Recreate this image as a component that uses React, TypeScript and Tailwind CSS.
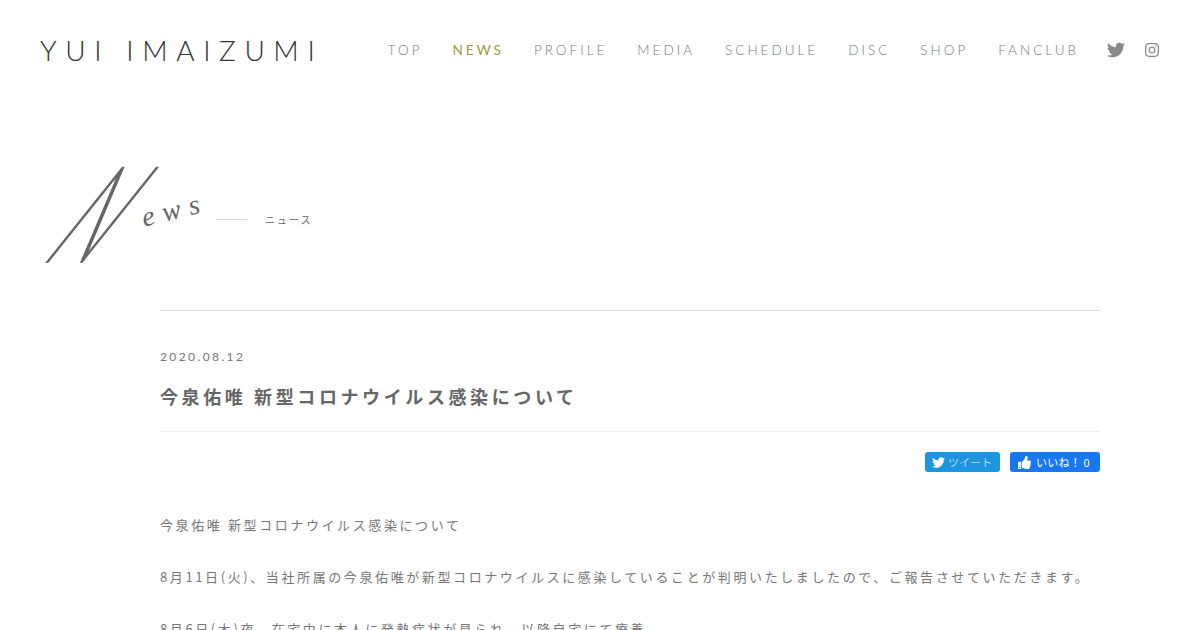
import { FaTwitter, FaInstagram, FaThumbsUp } from "react-icons/fa";

const nav = ["TOP", "NEWS", "PROFILE", "MEDIA", "SCHEDULE", "DISC", "SHOP", "FANCLUB"];

export default function App() {
  return (
    <div className="h-[630px] overflow-hidden bg-white text-[#666] font-['Noto_Sans_CJK_JP',sans-serif]">
      <header className="flex h-[100px] items-center justify-between px-10">
        <h1 className="font-['Lato',sans-serif] text-[28px] font-light leading-none tracking-[8.6px] text-[#333] whitespace-nowrap">
          YUI IMAIZUMI
        </h1>
        <nav className="flex items-center gap-[30px]">
          {nav.map((n) => (
            <span
              key={n}
              className={
                n === "NEWS"
                  ? "font-['Lato',sans-serif] text-[13.5px] font-normal tracking-[3px] text-[#a39a3e] whitespace-nowrap"
                  : "font-['Lato',sans-serif] text-[13.5px] font-light tracking-[3px] text-[#757a80] whitespace-nowrap"
              }
            >
              {n}
            </span>
          ))}
          <div className="-ml-[2px] flex items-center gap-[19px]">
            <FaTwitter className="h-[18px] w-[18px] text-[#888]" />
            <FaInstagram className="h-4 w-4 text-[#888]" />
          </div>
        </nav>
      </header>

      <div className="flex h-[210px] items-start pl-[45px] pt-[68px]">
        <div className="flex h-[94px] w-[156px] items-end text-[#666]">
          <span className="inline-block w-[96px] origin-bottom-left -translate-x-[3px] -translate-y-[4px] scale-x-[0.5] -skew-x-[58deg] font-['Lato',sans-serif] text-[136px] font-light leading-[94px]">N</span>
          <span className="inline-block -translate-y-[38px] -rotate-[14deg] whitespace-nowrap font-['Liberation_Serif',serif] text-[28px] italic leading-none tracking-[0.3em]">ews</span>
        </div>
        <div className="ml-[15px] mt-[51px] h-px w-[31px] bg-[#ddd]" />
        <span className="ml-[18px] mt-[44px] text-[10px] leading-[16px] tracking-[0.2em] text-[#666]">ニュース</span>
      </div>

      <main className="ml-[160px] w-[940px] border-t border-[#ddd]">
        <p className="mt-[38px] font-['Lato',sans-serif] text-[12px] font-normal leading-[16px] tracking-[0.2em] text-[#777]">2020.08.12</p>
        <h2 className="mt-[18px] border-b border-[#eee] pb-[21px] text-[18px] font-bold leading-[27px] tracking-[0.2em] text-[#666]">
          今泉佑唯 新型コロナウイルス感染について
        </h2>
        <div className="mt-[20px] flex justify-end gap-[10px]">
          <div className="flex h-5 w-[75px] items-center gap-[3px] rounded-[3px] bg-[#1b95e0] pl-[7px] text-[11px] font-light text-white">
            <FaTwitter className="h-[13px] w-[13px]" />
            <span>ツイート</span>
          </div>
          <div className="flex h-5 w-[90px] items-center gap-[5px] rounded-[3px] bg-[#1877f2] pl-2 text-[11px] text-white">
            <FaThumbsUp className="h-[13px] w-[13px]" />
            <span className="tracking-[0.02em]">いいね！ 0</span>
          </div>
        </div>
        <div className="mt-[40px] text-[13px] font-normal leading-[26px] tracking-[0.2em] text-[#777]">
          今泉佑唯 新型コロナウイルス感染について
          <br />
          <br />
          8月11日(火)、当社所属の今泉佑唯が新型コロナウイルスに感染していることが判明いたしましたので、ご報告させていただきます。
          <br />
          <br />
          8月6日(木)夜、在宅中に本人に発熱症状が見られ、以降自宅にて療養
        </div>
      </main>
    </div>
  );
}
